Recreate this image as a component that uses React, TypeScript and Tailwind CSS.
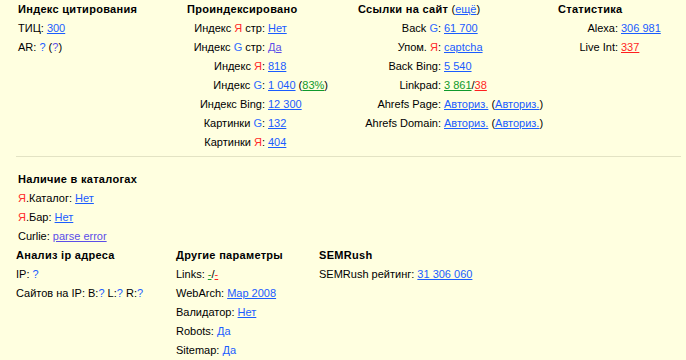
import React from "react";

const L = "text-[#1a5cff] underline";
const V = "text-[#5b4ee8] underline";
const Y = () => <span className="text-[#ff2a2a]">Я</span>;
const G = () => <span className="text-[#2f6bff]">G</span>;

function Row({ label, children, w }: { label: React.ReactNode; children: React.ReactNode; w: string }) {
  return (
    <div className="flex h-[19px] items-center whitespace-nowrap">
      <div className={`${w} text-right pr-[3px]`}>{label}</div>
      <div>{children}</div>
    </div>
  );
}

function H({ children }: { children: React.ReactNode }) {
  return <div className="h-[19px] flex items-center font-bold tracking-[0.3px] whitespace-nowrap">{children}</div>;
}

function P({ children }: { children: React.ReactNode }) {
  return <div className="h-[19px] flex items-center whitespace-nowrap">{children}</div>;
}

export default function App() {
  return (
    <div
      className="w-[686px] h-[360px] bg-[#ffffe0] text-black text-[11px] leading-[19px] overflow-hidden"
      style={{ fontFamily: '"Liberation Sans", Arial, sans-serif' }}
    >
      <div className="flex">
        <div className="w-[187px] pl-[18px]">
          <H>Индекс цитирования</H>
          <P>
            ТИЦ:&nbsp;<span className={L}>300</span>
          </P>
          <P>
            AR:&nbsp;<span className="text-[#1a5cff]">?</span>&nbsp;(<span className="text-[#5b4ee8]">?</span>)
          </P>
        </div>
        <div className="w-[171px]">
          <H>Проиндексировано</H>
          <Row w="w-[81px]" label={<>Индекс <Y /> стр:</>}><span className={L}>Нет</span></Row>
          <Row w="w-[81px]" label={<>Индекс <G /> стр:</>}><span className={V}>Да</span></Row>
          <Row w="w-[81px]" label={<>Индекс <Y />:</>}><span className={L}>818</span></Row>
          <Row w="w-[81px]" label={<>Индекс <G />:</>}>
            <span className={L}>1 040</span> (<span className="text-[#0f9a2c] underline">83%</span>)
          </Row>
          <Row w="w-[81px]" label="Индекс Bing:"><span className={L}>12 300</span></Row>
          <Row w="w-[81px]" label={<>Картинки <G />:</>}><span className={L}>132</span></Row>
          <Row w="w-[81px]" label={<>Картинки <Y />:</>}><span className={L}>404</span></Row>
        </div>
        <div className="w-[200px]">
          <H>
            Ссылки на сайт&nbsp;<span className="font-normal tracking-normal">(<span className={L}>ещё</span>)</span>
          </H>
          <Row w="w-[86px]" label={<>Back <G />:</>}><span className={L}>61 700</span></Row>
          <Row w="w-[86px]" label={<>Упом. <Y />:</>}><span className={L}>captcha</span></Row>
          <Row w="w-[86px]" label="Back Bing:"><span className={L}>5 540</span></Row>
          <Row w="w-[86px]" label="Linkpad:">
            <span className="text-[#0f9a2c] underline">3 861</span>/<span className="text-[#ff1f1f] underline">38</span>
          </Row>
          <Row w="w-[86px]" label="Ahrefs Page:">
            <span className={L}>Авториз.</span> (<span className={L}>Авториз.</span>)
          </Row>
          <Row w="w-[86px]" label="Ahrefs Domain:">
            <span className={L}>Авториз.</span> (<span className={L}>Авториз.</span>)
          </Row>
        </div>
        <div className="flex-1">
          <H>Статистика</H>
          <Row w="w-[63px]" label="Alexa:"><span className={L}>306 981</span></Row>
          <Row w="w-[63px]" label="Live Int:"><span className="text-[#ff1f1f] underline">337</span></Row>
        </div>
      </div>

      <div className="ml-[16px] mr-[5px] mt-[4px] border-t border-[#e3e3c4]" />

      <div className="pl-[18px] mt-[13px]">
        <H>Наличие в каталогах</H>
        <P>
          <Y />.Каталог:&nbsp;<span className={L}>Нет</span>
        </P>
        <P>
          <Y />.Бар:&nbsp;<span className={L}>Нет</span>
        </P>
        <P>
          Curlie:&nbsp;<span className={V}>parse error</span>
        </P>
      </div>

      <div className="flex pl-[16px]">
        <div className="w-[160px]">
          <H>Анализ ip адреса</H>
          <P>
            IP:&nbsp;<span className="text-[#1a5cff]">?</span>
          </P>
          <P>
            Сайтов на IP:&nbsp;B:<span className="text-[#1a5cff]">?</span>&nbsp;L:<span className="text-[#1a5cff]">?</span>&nbsp;R:<span className="text-[#1a5cff]">?</span>
          </P>
        </div>
        <div className="w-[143px]">
          <H>Другие параметры</H>
          <P>
            Links:&nbsp;<span className="text-[#0f9a2c] underline">-</span>/<span className="text-[#ff1f1f] underline">-</span>
          </P>
          <P>
            WebArch:&nbsp;<span className={L}>Map 2008</span>
          </P>
          <P>
            Валидатор:&nbsp;<span className={L}>Нет</span>
          </P>
          <P>
            Robots:&nbsp;<span className="text-[#1a5cff]">Да</span>
          </P>
          <P>
            Sitemap:&nbsp;<span className="text-[#1a5cff]">Да</span>
          </P>
        </div>
        <div>
          <H>SEMRush</H>
          <P>
            SEMRush рейтинг:&nbsp;<span className={L}>31 306 060</span>
          </P>
        </div>
      </div>
    </div>
  );
}
